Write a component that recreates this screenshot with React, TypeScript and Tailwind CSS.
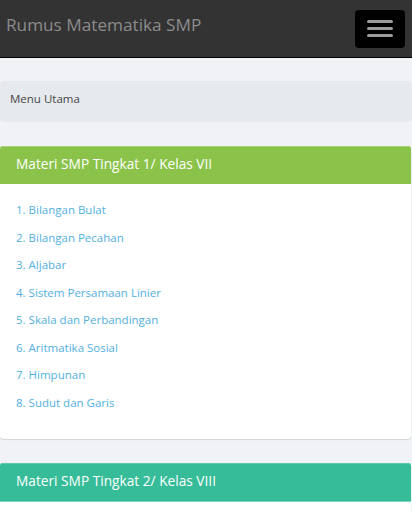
const kelas7 = [
  '1. Bilangan Bulat',
  '2. Bilangan Pecahan',
  '3. Aljabar',
  '4. Sistem Persamaan Linier',
  '5. Skala dan Perbandingan',
  '6. Aritmatika Sosial',
  '7. Himpunan',
  '8. Sudut dan Garis',
];

export default function App() {
  return (
    <div className="min-h-[512px] bg-[#f0f2f5] font-['Open_Sans',sans-serif]">
      <header className="flex h-[58px] items-center justify-between border-b border-black bg-[#333333] pl-[6px] pr-[7px]">
        <span className="-mt-[8px] text-[17.2px] text-[#8c8c8c]">Rumus Matematika SMP</span>
        <button className="flex h-[38px] w-[50px] flex-col items-center justify-center gap-[4px] rounded-[4px] bg-black">
          <span className="block h-[3px] w-[26px] rounded-sm bg-[#9a9a9a]" />
          <span className="block h-[3px] w-[26px] rounded-sm bg-[#9a9a9a]" />
          <span className="block h-[3px] w-[26px] rounded-sm bg-[#9a9a9a]" />
        </button>
      </header>

      <div className="pt-[23px]">
        <div className="flex h-[41px] items-center rounded-[4px] bg-[#e6e9ed] px-[10px] pb-[6px] text-[11.5px] text-[#444]">
          Menu Utama
        </div>
      </div>

      <section className="mt-[24px] mr-[1px] overflow-hidden rounded-t-[3px] rounded-b-[4px] bg-white shadow-[0_1px_1px_rgba(0,0,0,0.12)]">
        <div className="flex h-[38px] items-center border-t border-[#a6d277] bg-[#8bc34a] px-[16px] pb-[2px] text-[13.7px] text-white">
          Materi SMP Tingkat 1/ Kelas VII
        </div>
        <ul className="flex flex-col gap-[10px] px-[16px] pt-[17px] pb-[28px]">
          {kelas7.map((item) => (
            <li key={item} className="h-[17.5px] text-[11.5px] leading-[17.5px] text-[#52b0e0]">
              {item}
            </li>
          ))}
        </ul>
      </section>

      <section className="mt-[24px] mr-[1px] overflow-hidden rounded-t-[3px] bg-white">
        <div className="flex h-[39px] items-center border-t border-[#5ccaa9] border-b border-b-[#7dd6bb] bg-[#36bc98] px-[16px] pb-[2px] text-[13.7px] text-white">
          Materi SMP Tingkat 2/ Kelas VIII
        </div>
        <div className="h-[20px] bg-white" />
      </section>
    </div>
  );
}
